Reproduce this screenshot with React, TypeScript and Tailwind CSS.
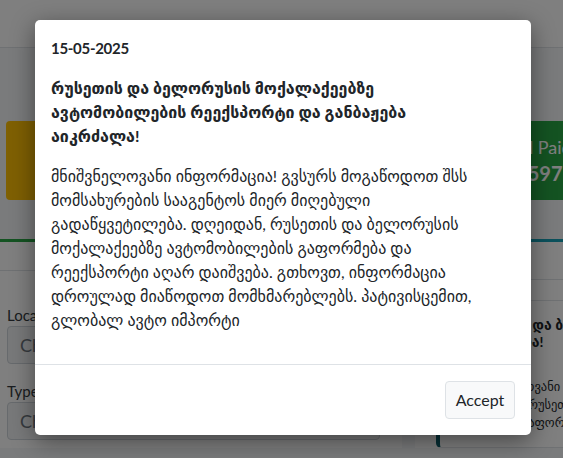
import React from "react";

const font = "font-['Lato','DejaVu_Sans',sans-serif]";

const titleLines = [
  "რუსეთის და ბელორუსის მოქალაქეებზე",
  "ავტომობილების რეექსპორტი და განბაჟება",
  "აიკრძალა!",
];

const bodyLines = [
  "მნიშვნელოვანი ინფორმაცია! გვსურს მოგაწოდოთ შსს",
  "მომსახურების სააგენტოს მიერ მიღებული",
  "გადაწყვეტილება. დღეიდან, რუსეთის და ბელორუსის",
  "მოქალაქეებზე ავტომობილების გაფორმება და",
  "რეექსპორტი აღარ დაიშვება. გთხოვთ, ინფორმაცია",
  "დროულად მიაწოდოთ მომხმარებლებს. პატივისცემით,",
  "გლობალ ავტო იმპორტი",
];

function Page() {
  return (
    <div className="h-[458px] w-full overflow-hidden bg-[#f4f6f9]">
      <header className="h-[48px] border-b border-[#dee2e6] bg-white" />

      <div className="flex items-start justify-between pl-[6px] pt-[73px]">
        <div className="h-[79px] w-[160px] shrink-0 rounded-[4px] bg-[#ffc107]" />
        <div className="mr-[-84px] h-[79px] w-[170px] shrink-0 rounded-[4px] bg-[#28a745] pl-[18px] pt-[14px] text-white">
          <p className="whitespace-nowrap text-[18px] leading-[24px]">Total Paid</p>
          <p className="whitespace-nowrap text-[20px] font-bold leading-[28px]">$ 1,597</p>
        </div>
      </div>

      <div className="mt-[39px] flex gap-[13px]">
        <section className="h-[209px] w-[402px] shrink-0 border-t-[3px] border-[#28a745] bg-white">
          <div className="h-[29px] border-b border-[#dee2e6]" />
          <div className="pl-[7px] pr-[22px] pt-[33px]">
            <label className="block text-[15px] leading-[22px] text-[#343a40]">Location</label>
            <div className="flex h-[38px] items-center rounded-[4px] border border-[#ced4da] bg-[#f1f2f4] px-[12px] text-[18px] text-[#6c757d]">
              Choose...
            </div>
            <label className="mt-[16px] block text-[15px] leading-[22px] text-[#343a40]">Type</label>
            <div className="flex h-[38px] items-center rounded-[4px] border border-[#ced4da] bg-[#f1f2f4] px-[12px] text-[18px] text-[#6c757d]">
              Choose...
            </div>
          </div>
        </section>

        <section className="h-[209px] min-w-0 flex-1 overflow-hidden border-t-[3px] border-[#17a2b8] bg-white">
          <div className="h-[38px] border-b border-[#dee2e6]" />
          <div className="pl-[21px] pt-[20px]">
            <div className="h-[148px] w-[300px] rounded-[5px] border border-l-[4px] border-[#dee2e6] border-l-[#0f5f6b] pl-[26px] pt-[15px]">
              <p className="whitespace-nowrap text-[14px] font-bold leading-[17px] text-[#212529]">
                რუსეთის და ბელორუსის მოქალაქეებზე
                <br />
                აიკრძალა!
              </p>
              <p className="mt-[28px] whitespace-nowrap text-[12.5px] leading-[18px] text-[#212529]">
                მნიშვნელოვანი ინფორმაცია! გვსურს
                <br />
                დღეიდან, რუსეთის და ბელორუსის
                <br />
                მანქანის გაფორმება და
              </p>
            </div>
          </div>
        </section>
      </div>
    </div>
  );
}

export default function App() {
  return (
    <div className={`relative h-[458px] w-full overflow-hidden ${font}`}>
      <Page />

      <div className="absolute inset-0 bg-black/50" />

      <div className="absolute left-[35px] top-[20px] w-[496px] rounded-[5px] bg-white shadow-[0_6px_24px_rgba(0,0,0,0.45)]">
        <div className="p-4 text-[16px] leading-[24px] text-[#212529]">
          <p className="mb-4 text-[15px] font-bold tracking-[-0.02em]">15-05-2025</p>
          <p className="mb-4 whitespace-nowrap font-bold">
            {titleLines.map((line, i) => (
              <span key={i} className="block">
                {line}
              </span>
            ))}
          </p>
          <p className="mb-4 whitespace-nowrap">
            {bodyLines.map((line, i) => (
              <span key={i} className="block">
                {line}
              </span>
            ))}
          </p>
        </div>
        <div className="flex justify-end border-t border-[#dee2e6] p-3">
          <button
            type="button"
            className="m-1 h-[38px] w-[70px] rounded-[4px] border border-[#dee2e6] bg-[#f8f9fa] text-[16px] text-[#212529]"
          >
            Accept
          </button>
        </div>
      </div>
    </div>
  );
}
